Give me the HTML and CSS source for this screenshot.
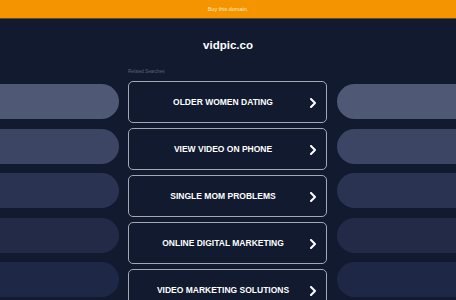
FILE: index.html
```html
<!DOCTYPE html>
<html>
<head>
<meta charset="utf-8">
<link rel="stylesheet" href="styles.css">
</head>
<body>
<div class="topbar">Buy this domain.</div>
<h1 class="title">vidpic.co</h1>
<div class="layout">
  <div class="side side-left">
    <div class="pill p1"></div>
    <div class="pill p2"></div>
    <div class="pill p3"></div>
    <div class="pill p4"></div>
    <div class="pill p5"></div>
  </div>
  <div class="center">
    <div class="label">Related Searches</div>
    <div class="links">
      <a class="link"><span class="txt">OLDER WOMEN DATING</span><svg class="chev" viewBox="0 0 8 10" width="8" height="10"><polyline points="2,1 6,5 2,9" fill="none" stroke="#fff" stroke-width="2" stroke-linecap="round" stroke-linejoin="round"/></svg></a>
      <a class="link"><span class="txt">VIEW VIDEO ON PHONE</span><svg class="chev" viewBox="0 0 8 10" width="8" height="10"><polyline points="2,1 6,5 2,9" fill="none" stroke="#fff" stroke-width="2" stroke-linecap="round" stroke-linejoin="round"/></svg></a>
      <a class="link"><span class="txt">SINGLE MOM PROBLEMS</span><svg class="chev" viewBox="0 0 8 10" width="8" height="10"><polyline points="2,1 6,5 2,9" fill="none" stroke="#fff" stroke-width="2" stroke-linecap="round" stroke-linejoin="round"/></svg></a>
      <a class="link"><span class="txt">ONLINE DIGITAL MARKETING</span><svg class="chev" viewBox="0 0 8 10" width="8" height="10"><polyline points="2,1 6,5 2,9" fill="none" stroke="#fff" stroke-width="2" stroke-linecap="round" stroke-linejoin="round"/></svg></a>
      <a class="link"><span class="txt">VIDEO MARKETING SOLUTIONS</span><svg class="chev" viewBox="0 0 8 10" width="8" height="10"><polyline points="2,1 6,5 2,9" fill="none" stroke="#fff" stroke-width="2" stroke-linecap="round" stroke-linejoin="round"/></svg></a>
    </div>
  </div>
  <div class="side side-right">
    <div class="pill p1"></div>
    <div class="pill p2"></div>
    <div class="pill p3"></div>
    <div class="pill p4"></div>
    <div class="pill p5"></div>
  </div>
</div>
</body>
</html>
```
FILE: styles.css
```css
html, body {
  margin: 0;
  padding: 0;
  background: #111a2f;
  font-family: "Liberation Sans", Arial, sans-serif;
  overflow: hidden;
  height: 300px;
}
.topbar {
  height: 18px;
  line-height: 18px;
  background: #f49500;
  border-bottom: 1px solid #5e4a2c;
  color: #fbe7c6;
  font-size: 5.5px;
  text-align: center;
}
.title {
  margin: 19px 0 0 0;
  height: 14px;
  line-height: 14px;
  font-size: 11.5px;
  font-weight: bold;
  color: #ffffff;
  text-align: center;
}
.layout {
  display: grid;
  grid-template-columns: 119px 199px 1fr;
  column-gap: 9px;
  margin-top: 17px;
}
.label {
  height: 6px;
  line-height: 6px;
  font-size: 4.6px;
  color: #5c6378;
  margin-bottom: 6px;
}
.links {
  display: flex;
  flex-direction: column;
  gap: 5px;
}
.link {
  box-sizing: border-box;
  height: 42px;
  border: 1.5px solid #a4a8b4;
  border-radius: 5px;
  display: flex;
  align-items: center;
  justify-content: center;
  position: relative;
  color: #ffffff;
  font-weight: bold;
  font-size: 8.5px;
  padding-right: 9px;
}
.chev {
  position: absolute;
  right: 9px;
  top: 15.5px;
}
.side {
  display: flex;
  flex-direction: column;
  gap: 9.5px;
  padding-top: 15px;
}
.side-right {
  margin-left: 1px;
}
.pill {
  height: 35px;
}
.side-left .pill {
  border-radius: 0 18px 18px 0;
}
.side-right .pill {
  border-radius: 18px 0 0 18px;
}
.p1 { background: #4f5875; }
.p2 { background: #3c4563; }
.p3 { background: #2b3352; }
.p4 { background: #222a48; }
.p5 { background: #1f2746; }
```
